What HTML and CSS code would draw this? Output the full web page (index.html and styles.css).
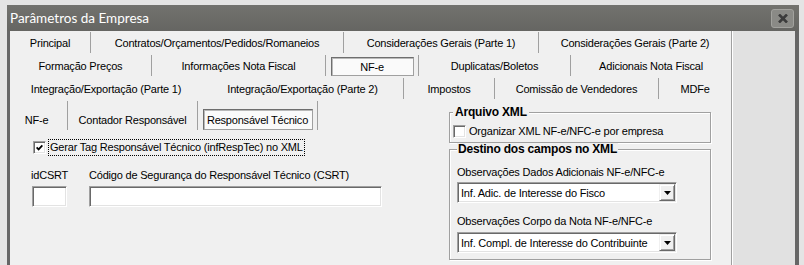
FILE: index.html
```html
<!DOCTYPE html>
<html lang="pt">
<head>
<meta charset="UTF-8">
<title>Parâmetros da Empresa</title>
<link rel="stylesheet" href="styles.css">
</head>
<body>
  <div class="window">
    <div class="titlebar">
      <span class="title">Parâmetros da Empresa</span>
      <button class="close" type="button">
        <svg width="10" height="9" viewBox="0 0 10 9"><path d="M1 0.5 L9 8.5 M9 0.5 L1 8.5" stroke="#3b3b3b" stroke-width="2.6"/></svg>
      </button>
    </div>
    <div class="frame">
      <div class="main">
        <div class="tabrow row1">
          <div class="tab">Principal</div>
          <div class="tab">Contratos/Orçamentos/Pedidos/Romaneios</div>
          <div class="tab">Considerações Gerais (Parte 1)</div>
          <div class="tab">Considerações Gerais (Parte 2)</div>
        </div>
        <div class="tabrow row2">
          <div class="tab">Formação Preços</div>
          <div class="tab">Informações Nota Fiscal</div>
          <div class="tab active"><span class="sel">NF-e</span></div>
          <div class="tab">Duplicatas/Boletos</div>
          <div class="tab">Adicionais Nota Fiscal</div>
        </div>
        <div class="tabrow row3">
          <div class="tab">Integração/Exportação (Parte 1)</div>
          <div class="tab nosep">Integração/Exportação (Parte 2)</div>
          <div class="tab">Impostos</div>
          <div class="tab">Comissão de Vendedores</div>
          <div class="tab">MDFe</div>
        </div>

        <div class="pane">
          <div class="left">
            <div class="subtabs">
              <div class="st st1">NF-e</div>
              <div class="st st2">Contador Responsável</div>
              <div class="st st3"><span class="sel sel2">Responsável Técnico</span></div>
            </div>

            <div class="checkrow">
              <span class="box sunken">
                <svg width="7" height="7" viewBox="0 0 7 7"><path d="M0.6 3.4 L2.6 5.4 L6.4 1.4" stroke="#000" stroke-width="1.8" fill="none"/></svg>
              </span>
              <span class="focus">Gerar Tag Responsável Técnico (infRespTec) no XML</span>
            </div>

            <div class="fields">
              <div class="field f1">
                <label>idCSRT</label>
                <div class="input in1 sunken"></div>
              </div>
              <div class="field">
                <label>Código de Segurança do Responsável Técnico (CSRT)</label>
                <div class="input in2 sunken"></div>
              </div>
            </div>
          </div>

          <div class="right">
            <fieldset class="grp1">
              <legend>Arquivo XML</legend>
              <div class="opt">
                <span class="box sunken"></span>
                <span>Organizar XML NF-e/NFC-e por empresa</span>
              </div>
            </fieldset>
            <fieldset class="grp2">
              <legend>Destino dos campos no XML</legend>
              <div class="lbl">Observações Dados Adicionais NF-e/NFC-e</div>
              <div class="select sunken">
                <span class="value">Inf. Adic. de Interesse do Fisco</span>
                <span class="drop"><svg width="7" height="4" viewBox="0 0 7 4"><path d="M0 0 H7 L3.5 4 Z"/></svg></span>
              </div>
              <div class="lbl lbl2">Observações Corpo da Nota NF-e/NFC-e</div>
              <div class="select sel-b sunken">
                <span class="value">Inf. Compl. de Interesse do Contribuinte</span>
                <span class="drop"><svg width="7" height="4" viewBox="0 0 7 4"><path d="M0 0 H7 L3.5 4 Z"/></svg></span>
              </div>
            </fieldset>
          </div>
        </div>
      </div>
      <div class="side"></div>
    </div>
  </div>
</body>
</html>
```

FILE: styles.css
```css
* {
  box-sizing: border-box;
}
body {
  margin: 0;
  background-color: #e4e4e4;
  font-family: "Liberation Sans", Arial, sans-serif;
  font-size: 11px;
  letter-spacing: -0.2px;
  color: #000;
  overflow: hidden;
}
.window {
  margin: 5px 0 0 7px;
  width: 792px;
}
.titlebar {
  height: 26px;
  padding: 0 5px 0 3px;
  display: flex;
  align-items: center;
  justify-content: space-between;
  background: linear-gradient(#72726e, #656562);
}
.title {
  color: #fff;
  font-family: Lato, "Open Sans", sans-serif;
  font-size: 13.5px;
  letter-spacing: 0;
}
.close {
  width: 23px;
  height: 19px;
  padding: 0;
  display: flex;
  align-items: center;
  justify-content: center;
  background-color: #8a8a86;
  border: 1px solid #a2a29e;
  border-radius: 3px;
}
.frame {
  display: flex;
  height: 234px;
  background-color: #f0f0f0;
  border-left: 3px solid #666;
  border-right: 4px solid #666;
}
.main {
  width: 721px;
}
.side {
  width: 64px;
  background-color: #e1e1e1;
  border-left: 1px solid #a0a0a0;
  box-shadow: inset 1px 0 0 #fff;
}

/* abas principais */
.tabrow {
  display: grid;
  height: 23px;
}
.row1 {
  grid-template-columns: 80px 253px 195px 193px;
}
.row2 {
  grid-template-columns: 141px 174px 93px 152px 161px;
}
.row3 {
  grid-template-columns: 192px 201px 91px 164px 73px;
}
.tab {
  margin: 1px 0;
  display: flex;
  align-items: center;
  justify-content: center;
  white-space: nowrap;
}
.tab + .tab {
  border-left: 1px solid #a0a0a0;
}
.tab.nosep {
  border-left: none;
}
.tab.active {
  align-items: flex-end;
}
.sel {
  display: flex;
  align-items: center;
  justify-content: center;
  width: 83px;
  height: 19px;
  background-color: #fafafa;
  border: 1px solid #a0a0a0;
  border-top-color: #6e6e6e;
  border-left-color: #6e6e6e;
  box-shadow: inset 1px 1px 0 #b9b9b9;
}

/* painel */
.pane {
  display: flex;
}
.left {
  width: 439px;
}
.right {
  width: 262px;
  margin-top: 6px;
}
.subtabs {
  display: flex;
  height: 29px;
  margin-top: 1px;
}
.st {
  display: flex;
  align-items: center;
  justify-content: center;
  padding-top: 8px;
  white-space: nowrap;
}
.st1 {
  width: 57px;
  padding-right: 4px;
}
.st2 {
  width: 130px;
  border-left: 1px solid #a0a0a0;
}
.st3 {
  width: 121px;
  border-left: 1px solid #a0a0a0;
  border-right: 1px solid #a0a0a0;
}
.sel2 {
  width: 110px;
  height: 21px;
}

.sunken {
  background-color: #fff;
  border: 1px solid;
  border-color: #a0a0a0 #fff #fff #a0a0a0;
  box-shadow: inset 1px 1px 0 #696969, inset -1px -1px 0 #e3e3e3;
}
.box {
  width: 13px;
  height: 13px;
  flex: none;
  display: flex;
  align-items: center;
  justify-content: center;
}
.checkrow {
  display: flex;
  align-items: center;
  gap: 2px;
  height: 17px;
  margin-top: 9px;
  padding-left: 23px;
}
.focus {
  border: 1px dotted #000;
  padding: 0 1px;
  line-height: 15px;
  white-space: nowrap;
}
.fields {
  display: flex;
  gap: 22px;
  margin-top: 12px;
  padding-left: 22px;
}
.field label {
  display: block;
  line-height: 14px;
  margin-bottom: 4px;
  white-space: nowrap;
}
.f1 {
  width: 35px;
}
.f1 label {
  margin-left: -1px;
}
.input {
  height: 21px;
}
.in1 {
  width: 35px;
}
.in2 {
  width: 293px;
}

/* grupos */
fieldset {
  margin: 0;
  min-width: 0;
  border: 1px solid #a0a0a0;
  box-shadow: 1px 1px 0 #fff, inset 1px 1px 0 #fff;
}
legend {
  font-size: 12px;
  font-weight: bold;
  line-height: 13px;
  letter-spacing: -0.2px;
  background-color: #f0f0f0;
}
.grp1 {
  padding: 5px 0 4px 3px;
}
.grp1 legend {
  padding: 0 2px;
}
.grp2 {
  padding: 0 0 6px 7px;
}
.grp2 legend {
  padding: 0 1px;
}
.opt {
  display: flex;
  align-items: center;
  gap: 3px;
  height: 14px;
  white-space: nowrap;
}
.lbl {
  margin-top: 9px;
  line-height: 14px;
  white-space: nowrap;
}
.lbl2 {
  margin-top: 11px;
}
.select {
  display: flex;
  align-items: center;
  width: 220px;
  height: 21px;
  margin-top: 3px;
  padding: 0 1px 0 3px;
}
.sel-b {
  margin-top: 4px;
}
.value {
  flex: 1;
  white-space: nowrap;
  overflow: hidden;
}
.drop {
  width: 16px;
  height: 17px;
  flex: none;
  display: flex;
  align-items: center;
  justify-content: center;
  background-color: #f0f0f0;
  border: 1px solid;
  border-color: #f0f0f0 #696969 #696969 #f0f0f0;
  box-shadow: inset 1px 1px 0 #fff, inset -1px -1px 0 #a0a0a0;
}
```
